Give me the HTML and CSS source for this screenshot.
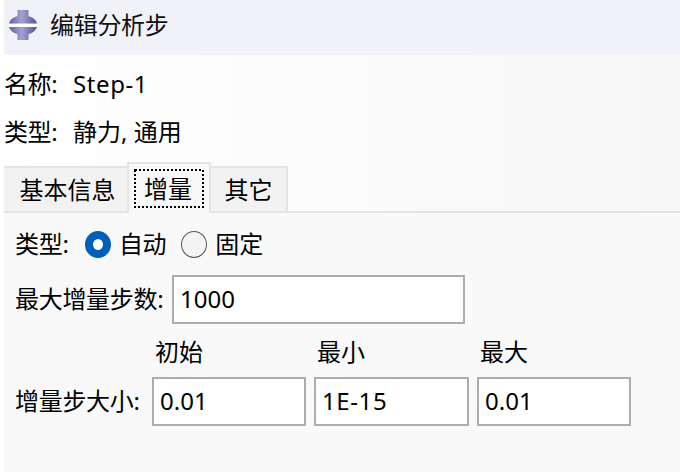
FILE: index.html
```html
<!DOCTYPE html>
<html lang="zh-CN">
<head>
<meta charset="utf-8">
<title>编辑分析步</title>
<link rel="stylesheet" href="styles.css">
</head>
<body>
<main class="dialog">
  <header class="titlebar">
    <svg class="logo" width="30" height="32" viewBox="0 0 30 32">
      <defs>
        <linearGradient id="metal" x1="0" x2="1" y1="0" y2="0">
          <stop offset="0" stop-color="#5f5ca2"/>
          <stop offset=".45" stop-color="#a3a2d2"/>
          <stop offset="1" stop-color="#545096"/>
        </linearGradient>
      </defs>
      <path fill="url(#metal)" d="M9.500 1h11v6c4.500 1.200 7.500 3.800 8.700 7.700H.8C2 10.800 5 8.200 9.500 7z"/>
      <path fill="url(#metal)" d="M.8 18h28.400c-1.700 3.800-4.700 6.200-8.700 7.200V31h-11v-5.800C5.500 24.200 2.500 21.800.8 18z"/>
      <path fill="#fff" d="M1 14.700h28V18H1z"/>
    </svg>
    <h1 class="title">编辑分析步</h1>
  </header>
  <section class="summary">
    <div class="pair"><span class="key">名称:</span><span class="step">Step-1</span></div>
    <div class="pair"><span class="key">类型:</span><span>静力, 通用</span></div>
  </section>
  <nav class="tabs">
    <div class="tab tab-first">基本信息</div>
    <div class="tab tab-active"><span class="focus"><svg class="focus-ring" width="70" height="39"><rect x="1" y="1" width="68" height="37"/></svg>增量</span></div>
    <div class="tab tab-last">其它</div>
  </nav>
  <section class="panel">
    <div class="row types">
      <span class="types-label">类型:</span>
      <span class="radio radio-on"></span><span class="auto">自动</span>
      <span class="radio"></span><span>固定</span>
    </div>
    <div class="row max"><span class="max-label">最大增量步数:</span><div class="field field-wide">1000</div></div>
    <div class="sizes">
      <span></span><span class="head">初始</span><span class="head">最小</span><span class="head">最大</span>
      <span class="size-label">增量步大小:</span>
      <div class="field">0.01</div><div class="field field-exp">1E-15</div><div class="field">0.01</div>
    </div>
  </section>
</main>
</body>
</html>
```
FILE: styles.css
```css
* { box-sizing: border-box; }
body {
  margin: 0;
  background: #fff;
  color: #000;
  font: 24px/34px "Noto Sans", "Noto Sans CJK SC", sans-serif;
  white-space: nowrap;
}
.dialog {
  display: flex;
  flex-direction: column;
  height: 472px;
  margin-left: 4px;
  overflow: hidden;
  background: linear-gradient(90deg, #fff, #f7f7f7);
}
.titlebar {
  display: flex;
  align-items: center;
  flex: none;
  height: 55px;
  padding: 0 0 5px 4px;
  background: #f0f2f7;
}
.logo { flex: none; }
.title { margin: -1px 0 0 12px; font-size: 24px; font-weight: 400; letter-spacing: -.3px; color: #111; }
.summary { flex: none; height: 107px; padding-top: 5px; }
.pair { display: flex; align-items: center; height: 48px; }
.key { width: 69px; letter-spacing: -.4px; }
.step { letter-spacing: .6px; }
.tabs {
  display: flex;
  align-items: flex-end;
  flex: none;
  height: 51px;
  box-shadow: inset 0 -2px #e4e4e4;
}
.tab {
  display: flex;
  align-items: center;
  justify-content: center;
  height: 47px;
  border: 2px solid #e4e4e4;
  background: #f2f2f2;
}
.tab-first { width: 123px; padding-left: 4px; border-left: 0; border-right: 0; }
.tab-active { width: 84px; height: 51px; border-bottom: 0; background: #f9f9f9; }
.tab-last { width: 77px; border-left: 0; }
.focus {
  position: relative;
  display: flex;
  align-items: center;
  justify-content: center;
  width: 70px;
  height: 39px;
  padding-right: 2px;
}
.focus-ring { position: absolute; inset: 0; }
.focus-ring rect { fill: none; stroke: #000; stroke-width: 2; stroke-dasharray: 2 2; }
.panel { flex: 1; padding: 8px 0 0 11px; background: #f9f9f9; }
.row { display: flex; align-items: center; }
.types { height: 46px; }
.types-label { width: 70px; letter-spacing: -.2px; }
.radio {
  flex: none;
  width: 26px;
  height: 27px;
  margin-right: 8px;
  border: 1.5px solid #555;
  border-radius: 50%;
  background: #f4f4f4;
}
.radio-on { border: 8px solid #005fb8; background: #fff; }
.auto { margin-right: 15px; letter-spacing: -.4px; }
.max { height: 64px; }
.max-label { width: 157px; letter-spacing: -.3px; }
.field {
  height: 49px;
  padding: 0 0 0 6px;
  border: 2px solid #abadb3;
  background: #fff;
  line-height: 44px;
}
.field-wide { width: 293px; }
.field-exp { letter-spacing: .6px; }
.sizes {
  display: grid;
  grid-template-columns: 129px 154px 155px 154px;
  grid-template-rows: 46px 49px;
  column-gap: 8px;
}
.head { padding-left: 3px; line-height: 42px; }
.size-label { line-height: 48px; letter-spacing: -.3px; }
```
